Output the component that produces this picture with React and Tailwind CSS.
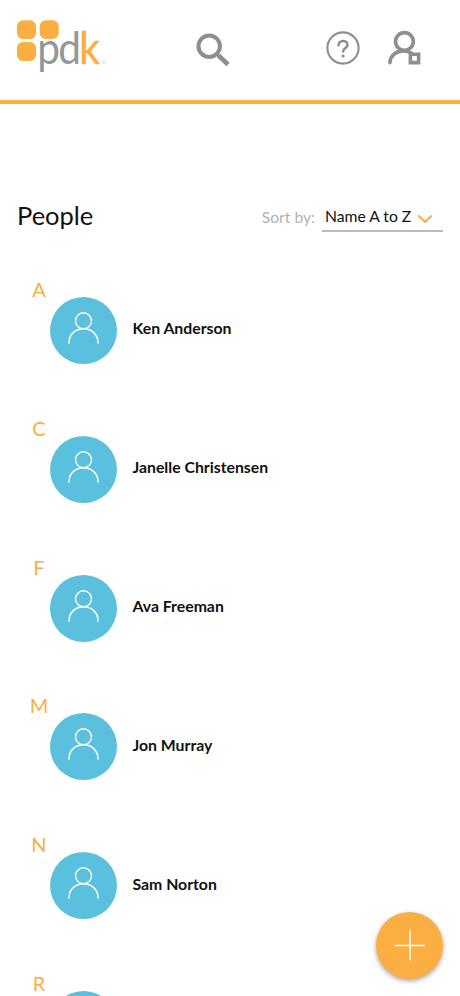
const people = [
  { letter: 'A', name: 'Ken Anderson' },
  { letter: 'C', name: 'Janelle Christensen' },
  { letter: 'F', name: 'Ava Freeman' },
  { letter: 'M', name: 'Jon Murray' },
  { letter: 'N', name: 'Sam Norton' },
  { letter: 'R', name: '' },
];

function Logo() {
  return (
    <svg width="92" height="60" viewBox="16 18 92 60" aria-label="pdk" className="shrink-0 font-[Lato,sans-serif]">
      <g fill="#fbae41">
        <rect x="17" y="20.2" width="19" height="18.8" rx="6" />
        <rect x="39.7" y="20.2" width="19" height="18.8" rx="6" />
        <rect x="17" y="42" width="19" height="19" rx="6" />
      </g>
      <text transform="translate(37.2 64.3) scale(.9 1)" fontSize="45" letterSpacing="-1.8" fill="#929799">
        pd<tspan fill="#fbae41" stroke="#fbae41" strokeWidth=".5">k</tspan>
      </text>
      <rect x="102.5" y="61.8" width="3" height="1.4" fill="#cfcfcf" />
    </svg>
  );
}

function Avatar() {
  return (
    <div className="mt-[23px] h-[67px] w-[67px] shrink-0 rounded-full bg-[#5bc0de]">
      <svg width="67" height="67" viewBox="0 0 67 67" fill="none" stroke="#fff" strokeWidth="1.4" strokeLinecap="round">
        <circle cx="33.5" cy="23.8" r="8" />
        <path d="M19 46.3v-.7C19 37.4 25.5 31.8 33.5 31.8S48 37.4 48 45.6v.7" />
      </svg>
    </div>
  );
}

function Header() {
  return (
    <header className="flex h-[104px] shrink-0 items-start border-b-4 border-[#fbae41] pl-4 pt-[18px]">
      <Logo />
      <svg width="36" height="36" viewBox="0 0 36 36" className="ml-[87px] mt-[14px]" fill="none" stroke="#8e8e8e">
        <circle cx="14.2" cy="14.2" r="10.7" strokeWidth="4" />
        <path d="M22 22l2.2 2.2" strokeWidth="3" />
        <path d="M23.5 23.5l9.5 9" strokeWidth="4.6" />
      </svg>
      <svg width="36" height="36" viewBox="0 0 36 36" className="ml-[94px] mt-[12px]" fill="none" stroke="#8e8e8e">
        <circle cx="18" cy="18" r="15.6" strokeWidth="2.1" />
        <path d="M13.5 15.2c0-2.5 1.9-4.3 4.5-4.3s4.5 1.7 4.5 4c0 3.1-4.5 3.5-4.5 6.7" strokeWidth="2.5" strokeLinecap="round" />
        <circle cx="18.1" cy="26" r="1.6" fill="#8e8e8e" stroke="none" />
      </svg>
      <svg width="36" height="36" viewBox="0 0 36 36" className="ml-[25px] mt-[12px]" fill="none" stroke="#8e8e8e">
        <circle cx="18.4" cy="11.5" r="8.9" strokeWidth="3.6" />
        <path d="M3.9 32.6C4.4 25.8 10 20.9 17.5 20.9c3.1 0 5.7.8 7.8 2.1" strokeWidth="3.6" strokeLinecap="round" />
        <path d="M24.4 24.2h8.2v8.4h-8.2z" strokeWidth="3.6" fill="#fff" />
      </svg>
    </header>
  );
}

export default function App() {
  return (
    <div className="h-[996px] w-[460px] overflow-hidden bg-white font-[Lato,sans-serif] text-[#111]">
      <Header />
      <main>
        <div className="flex h-[169px] items-start justify-between pl-[17px] pr-[17px] pt-[93px]">
          <h1 className="text-[25.5px] leading-[36px]">People</h1>
          <div className="flex pt-1 text-[15.7px] leading-[32px]">
            <span className="mr-[7px] text-[#b3b3b3]">Sort by:</span>
            <div className="flex h-[31px] w-[121px] items-center border-b-2 border-[#bbb] pl-[3px]">
              <span className="whitespace-nowrap pt-px">Name A to Z</span>
              <svg width="16" height="10" viewBox="0 0 16 10" className="ml-[6px] mt-[7px]" fill="none" stroke="#fbae41" strokeWidth="2">
                <path d="M1.2 1.5l6.8 6.3 6.8-6.3" />
              </svg>
            </div>
          </div>
        </div>
        <ul>
          {people.map((p) => (
            <li key={p.letter} className="flex h-[138.8px] items-start pl-[28px]">
              <span className="w-[22px] shrink-0 text-center text-[20px] leading-[32px] text-[#fbae41]">{p.letter}</span>
              <div className="pt-px"><Avatar /></div>
              <span className="ml-[15.5px] mt-[43.4px] text-[15.8px] font-bold leading-6">{p.name}</span>
            </li>
          ))}
        </ul>
      </main>
      <button aria-label="Add person" className="fixed left-[376px] top-[912px] h-[67px] w-[67px] rounded-full bg-[#fbae41] shadow-[0_2px_5px_rgba(0,0,0,0.35)]">
        <svg width="67" height="67" viewBox="0 0 67 67" stroke="#fff" strokeWidth="1.5">
          <path d="M19 33.5h30M34 18.5v30" />
        </svg>
      </button>
    </div>
  );
}
